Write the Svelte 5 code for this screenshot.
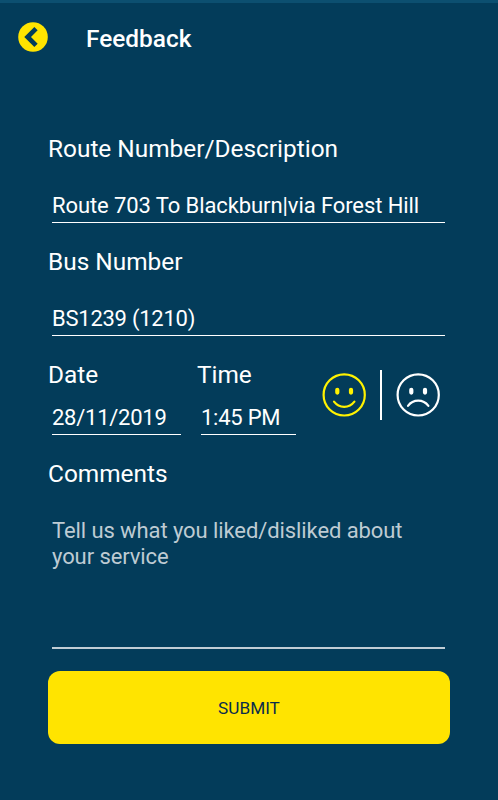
<script>
  let route = "Route 703 To Blackburn|via Forest Hill";
  let bus = "BS1239 (1210)";
  let date = "28/11/2019";
  let time = "1:45 PM";
  let liked = true;
</script>

<div class="screen">
  <header>
    <svg class="back" viewBox="0 0 30 30">
      <circle cx="15" cy="15" r="14.8" />
      <path d="M18 6.6 L9.6 15 L18 23.4" />
    </svg>
    <h1>Feedback</h1>
  </header>

  <main>
    <section class="group">
      <div class="label">Route Number/Description</div>
      <div class="field">{route}</div>
    </section>

    <section class="group">
      <div class="label">Bus Number</div>
      <div class="field numeric">{bus}</div>
    </section>

    <section class="row">
      <div class="date">
        <div class="label">Date</div>
        <div class="field short numeric">{date}</div>
      </div>
      <div class="time">
        <div class="label">Time</div>
        <div class="field short numeric">{time}</div>
      </div>
      <div class="rating">
        <svg class="face" class:selected={liked} viewBox="0 0 44 44">
          <circle cx="22.2" cy="21.9" r="20.6" />
          <path class="eye" d="M15.3 16.8v2.8M29 16.8v2.8" />
          <path d="M12 28.7c5.2 6.8 15.2 6.8 20.4 0" />
        </svg>
        <div class="divider"></div>
        <svg class="face" viewBox="0 0 44 44">
          <circle cx="22.2" cy="21.9" r="20.6" />
          <path class="eye" d="M15.3 16.8v2.8M29 16.8v2.8" />
          <path d="M12 32.8c5.2-6.8 15.2-6.8 20.4 0" />
        </svg>
      </div>
    </section>

    <section>
      <div class="label">Comments</div>
      <div class="comments">Tell us what you liked/disliked about<br />your service</div>
    </section>

    <button>SUBMIT</button>
  </main>
</div>

<style>
  :global(body) {
    margin: 0;
    background: #033c5a;
  }

  .screen {
    box-sizing: border-box;
    height: 800px;
    border-top: 3px solid #0c4f70;
    background: #033c5a;
    color: #fff;
    font-family: Roboto, sans-serif;
  }

  header {
    display: flex;
    align-items: center;
    height: 68px;
    padding-left: 18px;
  }

  .back {
    width: 30px;
    height: 30px;
    margin-right: 38px;
  }

  .back circle {
    fill: #ffe400;
  }

  .back path {
    fill: none;
    stroke: #033c5a;
    stroke-width: 4.7;
  }

  h1 {
    margin: 0;
    padding-top: 3px;
    font-size: 24.4px;
    font-weight: 500;
    line-height: 28px;
  }

  main {
    padding: 64px 48px 0;
  }

  .label {
    height: 28px;
    font-size: 24.4px;
    line-height: 28px;
    white-space: nowrap;
  }

  .field {
    display: flex;
    align-items: flex-end;
    box-sizing: border-box;
    height: 60px;
    margin: 0 5px 0 4px;
    padding-bottom: 3px;
    border-bottom: 1px solid #fff;
    font-size: 22px;
    line-height: 26px;
    letter-spacing: -0.09px;
    white-space: nowrap;
  }

  .numeric {
    letter-spacing: -0.25px;
  }

  .short {
    height: 46px;
    margin-right: 0;
  }

  .group {
    margin-bottom: 25px;
  }

  .row {
    display: flex;
    margin-bottom: 25px;
  }

  .date {
    width: 133px;
    margin-right: 16px;
  }

  .time {
    width: 99px;
  }

  .rating {
    display: flex;
    align-items: center;
    height: 50px;
    margin: 9px 0 0 26px;
  }

  .face {
    width: 44px;
    height: 44px;
    fill: none;
    stroke: #fff;
    stroke-width: 2.2;
    stroke-linecap: round;
  }

  .selected {
    stroke: #fff200;
  }

  .face .eye {
    stroke-width: 4.2;
  }

  .divider {
    width: 2px;
    height: 50px;
    margin: 0 14px;
    background: #fff;
  }

  .comments {
    box-sizing: border-box;
    height: 161px;
    margin: 0 5px 0 4px;
    padding-top: 30px;
    border-bottom: 2px solid #c0cdd5;
    color: #becbd3;
    font-size: 22px;
    line-height: 25.5px;
    letter-spacing: -0.09px;
    white-space: nowrap;
  }

  button {
    display: block;
    width: 402px;
    height: 73px;
    margin-top: 22px;
    padding: 0;
    border: 0;
    border-radius: 12px;
    background: #ffe400;
    color: #0a2c4c;
    font: 400 17.2px Roboto, sans-serif;
  }
</style>
